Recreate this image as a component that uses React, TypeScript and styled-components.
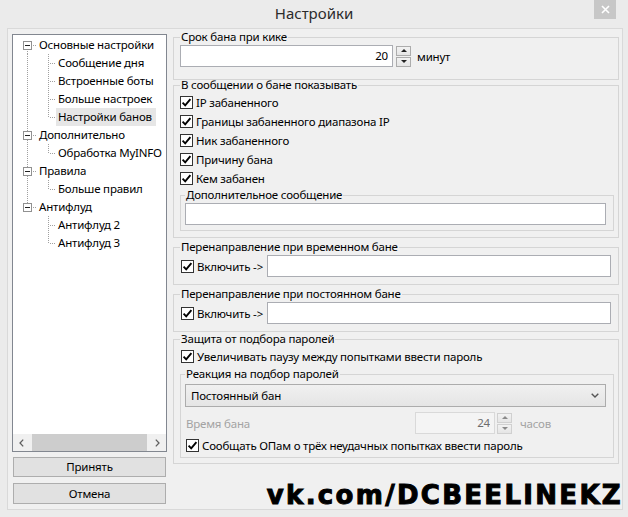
import React from 'react';
import styled, { createGlobalStyle } from 'styled-components';

const GlobalStyle = createGlobalStyle`
  html, body {
    margin: 0;
    padding: 0;
    background: #ebebeb;
  }
  body {
    font-family: "Noto Sans", "Open Sans", sans-serif;
    font-size: 11.5px;
    letter-spacing: -0.2px;
    color: #000;
  }
  * {
    box-sizing: border-box;
  }
`;

const Window = styled.div`
  position: relative;
  width: 628px;
  height: 517px;
  background: #ebebeb;
  overflow: hidden;
`;

const TitleBar = styled.div`
  height: 28px;
  display: grid;
  grid-template-columns: 1fr auto 1fr;
`;

const Title = styled.div`
  grid-column: 2;
  align-self: center;
  padding-bottom: 2px;
  font-size: 15px;
  letter-spacing: 0;
  color: #2b2b2b;
`;

const CloseButton = styled.div`
  grid-column: 3;
  justify-self: end;
  margin-right: 12px;
  width: 22px;
  height: 19px;
  background: #c7c7c7;
  display: flex;
  align-items: center;
  justify-content: center;
`;

const Client = styled.div`
  margin: 0 5px 0 7px;
  height: 482px;
  border: 1px solid #d9d9d9;
  background: #f0f0f0;
  display: flex;
  gap: 6px;
  padding: 5px 3px 4px 4px;
`;

const LeftColumn = styled.div`
  width: 155px;
  display: flex;
  flex-direction: column;
`;

const TreeBox = styled.div`
  height: 418px;
  border: 1px solid #828790;
  background: #fff;
  display: flex;
  flex-direction: column;
`;

const TreeList = styled.div`
  flex: 1;
  padding: 1px 0 0 5px;
  overflow: hidden;
`;

const TreeRow = styled.div`
  display: flex;
  align-items: center;
  height: 18px;
`;

const Gutter = styled.span<{ $up?: boolean; $down?: boolean; $right?: boolean; $lx?: number }>`
  position: relative;
  flex: none;
  width: 19px;
  height: 18px;
  display: flex;
  align-items: center;
  justify-content: center;

  &::before {
    content: '';
    display: ${(p) => (p.$up || p.$down ? 'block' : 'none')};
    position: absolute;
    left: ${(p) => p.$lx ?? 9}px;
    width: 1px;
    top: ${(p) => (p.$up ? 0 : 9)}px;
    bottom: ${(p) => (p.$down ? 0 : 9)}px;
    background-image: linear-gradient(to bottom, #a0a0a0 50%, transparent 50%);
    background-size: 1px 2px;
  }

  &::after {
    content: '';
    display: ${(p) => (p.$right ? 'block' : 'none')};
    position: absolute;
    top: 9px;
    left: ${(p) => (p.$lx ?? 9) + 1}px;
    right: 0;
    height: 1px;
    background-image: linear-gradient(to right, transparent 50%, #a0a0a0 50%);
    background-size: 2px 1px;
  }
`;

const ExpandBox = styled.span`
  position: relative;
  z-index: 1;
  width: 9px;
  height: 9px;
  margin-left: -1px;
  border: 1px solid #919191;
  background: #fff;
  display: flex;
  align-items: center;
  justify-content: center;

  &::before {
    content: '';
    width: 5px;
    height: 1px;
    background: #222;
  }
`;

const TreeLabel = styled.span<{ $selected?: boolean }>`
  padding: 0 2px;
  line-height: 18px;
  white-space: nowrap;
  background: ${(p) => (p.$selected ? '#e6e6e6' : 'transparent')};
  padding-right: ${(p) => (p.$selected ? 4 : 2)}px;
`;

const HScroll = styled.div`
  height: 17px;
  background: #f0f0f0;
  display: flex;
  align-items: center;
`;

const ScrollArrow = styled.div`
  width: 17px;
  height: 17px;
  display: flex;
  align-items: center;
  justify-content: center;
`;

const ScrollTrack = styled.div`
  flex: 1;
  height: 17px;
  padding: 0 2px;
`;

const ScrollThumb = styled.div`
  height: 100%;
  background: #cdcdcd;
`;

const Button = styled.div<{ $h: number; $mt: number }>`
  margin: ${(p) => p.$mt}px 1px 0;
  height: ${(p) => p.$h}px;
  border: 1px solid #adadad;
  background: #e1e1e1;
  display: flex;
  align-items: center;
  justify-content: center;
  padding-bottom: 1px;
`;

const RightColumn = styled.div`
  width: 446px;
  display: flex;
  flex-direction: column;
`;

const Group = styled.fieldset<{ $mt?: number; $pb?: number }>`
  margin: ${(p) => p.$mt ?? 0}px 0 0 0;
  padding: 2px 4px ${(p) => p.$pb ?? 6}px 6px;
  border: 1px solid #d5d5d5;
  min-width: 0;
`;

const SubGroup = styled.fieldset<{ $mt?: number; $pt?: number; $pb?: number }>`
  margin: ${(p) => p.$mt ?? 0}px 0 0 0;
  padding: ${(p) => p.$pt ?? 2}px 7px ${(p) => p.$pb ?? 5}px 4px;
  border: 1px solid #d5d5d5;
  min-width: 0;
`;

const Legend = styled.legend`
  padding: 0 1px;
  margin: 0;
  line-height: 12px;
  white-space: nowrap;
`;

const FieldRow = styled.div<{ $mt?: number }>`
  display: flex;
  align-items: center;
  height: 22px;
  margin-top: ${(p) => p.$mt ?? 0}px;
`;

const TextInput = styled.input<{ $width?: number; $mr?: number; $ml?: number }>`
  font: inherit;
  letter-spacing: inherit;
  height: 22px;
  width: ${(p) => (p.$width ? `${p.$width}px` : 'auto')};
  flex: ${(p) => (p.$width ? 'none' : '1')};
  min-width: 0;
  margin: 0 ${(p) => p.$mr ?? 0}px 0 ${(p) => p.$ml ?? 0}px;
  border: 1px solid #abadb3;
  background: #fff;
  color: #000;
  text-align: right;
  padding: 0 4px 1px;
  outline: none;

  &:disabled {
    border-color: #d9d9d9;
    background: #f4f4f4;
    color: #6d6d6d;
  }
`;

const SpinBox = styled.div<{ $ml?: number }>`
  display: flex;
  flex-direction: column;
  gap: 1px;
  margin-left: ${(p) => p.$ml ?? 3}px;
`;

const SpinButton = styled.div<{ $down?: boolean; $disabled?: boolean }>`
  width: 15px;
  height: 10px;
  border: 1px solid ${(p) => (p.$disabled ? '#d0d0d0' : '#acacac')};
  background: linear-gradient(#f2f2f2, #e5e5e5);
  display: flex;
  align-items: center;
  justify-content: center;

  &::before {
    content: '';
    width: 0;
    height: 0;
    border-left: 3px solid transparent;
    border-right: 3px solid transparent;
    ${(p) => (p.$down ? 'border-top' : 'border-bottom')}: 3px solid ${(p) => (p.$disabled ? '#8a8a8a' : '#222')};
  }
`;

const Unit = styled.span<{ $muted?: boolean; $ml?: number }>`
  margin-left: ${(p) => p.$ml ?? 6}px;
  color: ${(p) => (p.$muted ? '#a3a3a3' : '#000')};
`;

const CheckRow = styled.label<{ $mt?: number; $pl?: number }>`
  display: flex;
  align-items: center;
  height: 19px;
  gap: 3px;
  margin-top: ${(p) => p.$mt ?? 0}px;
  padding-left: ${(p) => p.$pl ?? 0}px;
  white-space: nowrap;
`;

const CheckBoxFrame = styled.span`
  flex: none;
  width: 13px;
  height: 13px;
  border: 1px solid #333;
  background: #fff;
  display: flex;
  align-items: center;
  justify-content: center;
`;

const Combo = styled.div`
  height: 23px;
  border: 1px solid #acacac;
  background: linear-gradient(#f0f0f0, #e5e5e5);
  display: flex;
  align-items: center;
  justify-content: space-between;
  padding: 0 6px 1px 5px;
`;

const MutedLabel = styled.span`
  width: 230px;
  padding-left: 1px;
  color: #a3a3a3;
`;

const Watermark = styled.div`
  position: absolute;
  right: 5px;
  top: 482px;
  font-family: "DejaVu Sans", "Liberation Sans", sans-serif;
  font-weight: 700;
  font-size: 26px;
  line-height: 26px;
  letter-spacing: 2.3px;
  color: #000;
  -webkit-text-stroke: 1px #000;
  white-space: nowrap;
`;

const CheckMark = () => (
  <svg width="11" height="11" viewBox="0 0 11 11">
    <path d="M1.6 5.6 L4.2 8.3 L9.4 2.2" stroke="#000" strokeWidth="1.9" fill="none" />
  </svg>
);

const CheckBox: React.FC<{ label: string; mt?: number; pl?: number }> = ({ label, mt, pl }) => (
  <CheckRow $mt={mt} $pl={pl}>
    <CheckBoxFrame>
      <CheckMark />
    </CheckBoxFrame>
    <span>{label}</span>
  </CheckRow>
);

const Spin: React.FC<{ disabled?: boolean; ml?: number }> = ({ disabled, ml }) => (
  <SpinBox $ml={ml}>
    <SpinButton $disabled={disabled} />
    <SpinButton $down $disabled={disabled} />
  </SpinBox>
);

type TreeNode = { label: string; children: string[] };

const tree: TreeNode[] = [
  { label: 'Основные настройки', children: ['Сообщение дня', 'Встроенные боты', 'Больше настроек', 'Настройки банов'] },
  { label: 'Дополнительно', children: ['Обработка MyINFO'] },
  { label: 'Правила', children: ['Больше правил'] },
  { label: 'Антифлуд', children: ['Антифлуд 2', 'Антифлуд 3'] },
];

const selectedItem = 'Настройки банов';

const Tree: React.FC = () => (
  <TreeList>
    {tree.map((node, i) => {
      const lastRoot = i === tree.length - 1;
      return (
        <React.Fragment key={node.label}>
          <TreeRow>
            <Gutter $up={i > 0} $down={!lastRoot} $right>
              <ExpandBox />
            </Gutter>
            <TreeLabel>{node.label}</TreeLabel>
          </TreeRow>
          {node.children.map((child, j) => (
            <TreeRow key={child}>
              <Gutter $up={!lastRoot} $down={!lastRoot} />
              <Gutter $up $down={j < node.children.length - 1} $right $lx={11} />
              <TreeLabel $selected={child === selectedItem}>{child}</TreeLabel>
            </TreeRow>
          ))}
        </React.Fragment>
      );
    })}
  </TreeList>
);

const App: React.FC = () => {
  return (
    <Window>
      <GlobalStyle />
      <TitleBar>
        <Title>Настройки</Title>
        <CloseButton>
          <svg width="9" height="9" viewBox="0 0 9 9">
            <path d="M1 1 L8 8 M8 1 L1 8" stroke="#fff" strokeWidth="1.6" />
          </svg>
        </CloseButton>
      </TitleBar>

      <Client>
        <LeftColumn>
          <TreeBox>
            <Tree />
            <HScroll>
              <ScrollArrow>
                <svg width="5" height="8" viewBox="0 0 5 8">
                  <path d="M4.2 0.6 L1 4 L4.2 7.4" stroke="#606060" strokeWidth="1.3" fill="none" />
                </svg>
              </ScrollArrow>
              <ScrollTrack>
                <ScrollThumb />
              </ScrollTrack>
              <ScrollArrow>
                <svg width="5" height="8" viewBox="0 0 5 8">
                  <path d="M0.8 0.6 L4 4 L0.8 7.4" stroke="#606060" strokeWidth="1.3" fill="none" />
                </svg>
              </ScrollArrow>
            </HScroll>
          </TreeBox>
          <Button $h={20} $mt={5}>Принять</Button>
          <Button $h={21} $mt={6}>Отмена</Button>
        </LeftColumn>

        <RightColumn>
          <Group $mt={-3} $pb={12}>
            <Legend>Срок бана при кике</Legend>
            <FieldRow>
              <TextInput readOnly value="20" $width={213} />
              <Spin />
              <Unit>минут</Unit>
            </FieldRow>
          </Group>

          <Group $mt={-1} $pb={6}>
            <Legend>В сообщении о бане показывать</Legend>
            <CheckBox label="IP забаненного" />
            <CheckBox label="Границы забаненного диапазона IP" />
            <CheckBox label="Ник забаненного" />
            <CheckBox label="Причину бана" />
            <CheckBox label="Кем забанен" />
            <SubGroup $mt={1}>
              <Legend>Дополнительное сообщение</Legend>
              <FieldRow>
                <TextInput readOnly value="" />
              </FieldRow>
            </SubGroup>
          </Group>

          <Group $mt={3} $pb={7}>
            <Legend>Перенаправление при временном бане</Legend>
            <FieldRow>
              <CheckBox label="Включить ->" pl={1} />
              <TextInput readOnly value="" $ml={4} $mr={3} />
            </FieldRow>
          </Group>

          <Group $mt={3} $pb={7}>
            <Legend>Перенаправление при постоянном бане</Legend>
            <FieldRow>
              <CheckBox label="Включить ->" pl={1} />
              <TextInput readOnly value="" $ml={4} $mr={3} />
            </FieldRow>
          </Group>

          <Group $mt={1} $pb={5}>
            <Legend>Защита от подбора паролей</Legend>
            <CheckBox label="Увеличивать паузу между попытками ввести пароль" pl={1} />
            <SubGroup $mt={2} $pt={4} $pb={2}>
              <Legend>Реакция на подбор паролей</Legend>
              <Combo>
                <span>Постоянный бан</span>
                <svg width="8" height="5" viewBox="0 0 8 5">
                  <path d="M0.7 0.7 L4 4 L7.3 0.7" stroke="#555" strokeWidth="1.4" fill="none" />
                </svg>
              </Combo>
              <FieldRow $mt={5}>
                <MutedLabel>Время бана</MutedLabel>
                <TextInput disabled value="24" $width={80} />
                <Spin disabled ml={2} />
                <Unit $muted $ml={8}>часов</Unit>
              </FieldRow>
              <CheckBox label="Сообщать ОПам о трёх неудачных попытках ввести пароль" mt={2} pl={1} />
            </SubGroup>
          </Group>
        </RightColumn>
      </Client>

      <Watermark>vk.com/DCBEELINEKZ</Watermark>
    </Window>
  );
};

export default App;
